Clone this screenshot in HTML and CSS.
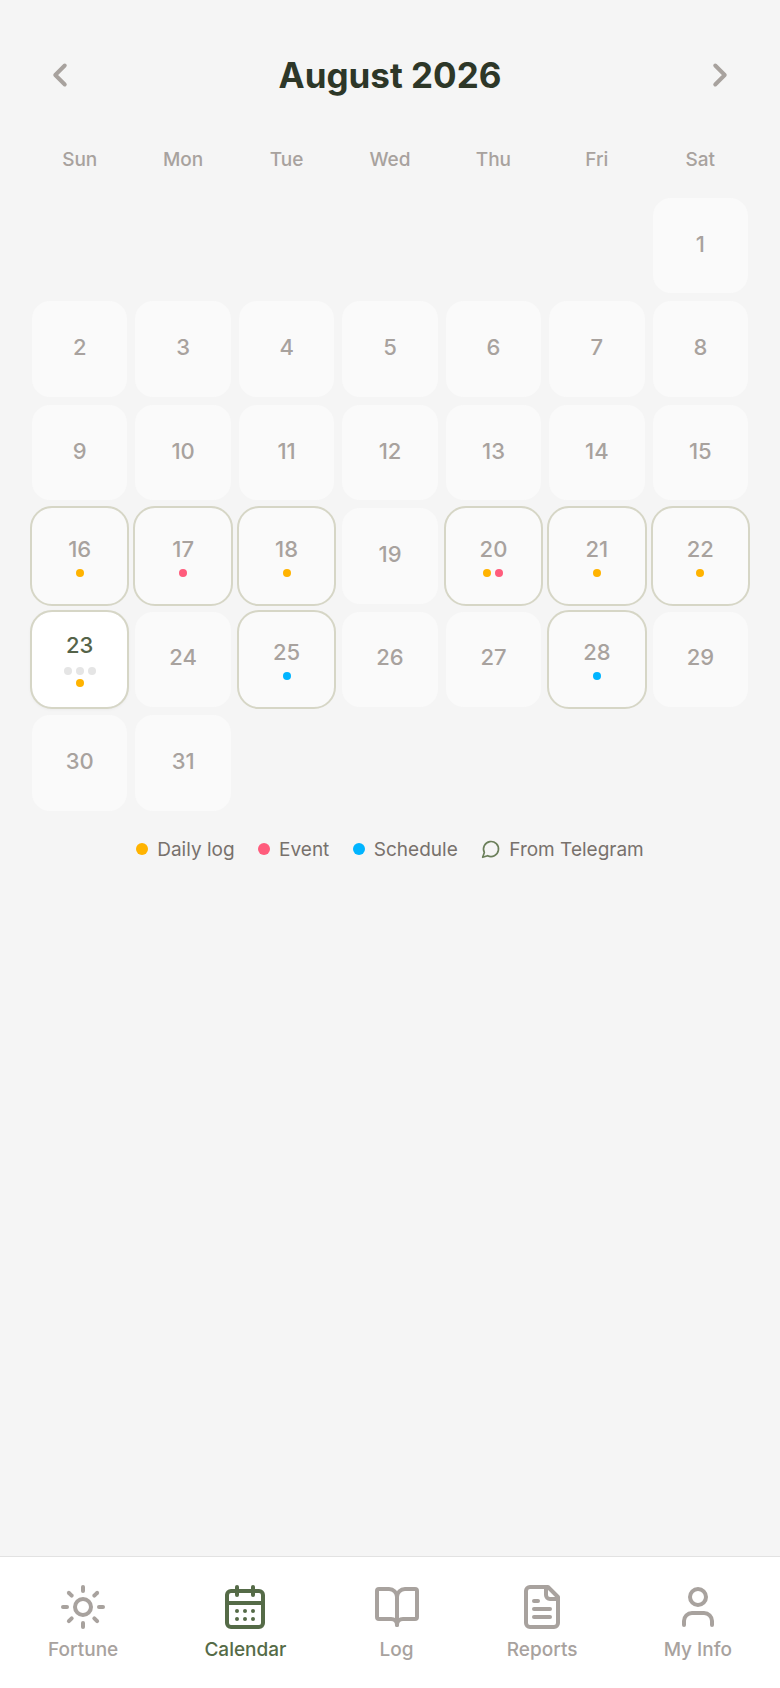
FILE: index.html
```html
<!DOCTYPE html>
<html lang="en">
<head>
  <meta charset="UTF-8" />
  <meta name="viewport" content="width=device-width, initial-scale=1.0"/>
  <title>Calendar</title>
  <link rel="stylesheet" href="styles.css">
</head>
<body>

<main class="page">
  <header class="month">
    <svg class="chev" viewBox="0 0 24 24"><path d="m15 18-6-6 6-6"/></svg>
    <h1>August 2026</h1>
    <svg class="chev" viewBox="0 0 24 24"><path d="m9 18 6-6-6-6"/></svg>
  </header>

  <div class="grid weekdays">
    <span>Sun</span><span>Mon</span><span>Tue</span><span>Wed</span><span>Thu</span><span>Fri</span><span>Sat</span>
  </div>

  <div class="grid days">
    <div class="blank"></div><div class="blank"></div><div class="blank"></div><div class="blank"></div><div class="blank"></div><div class="blank"></div>
    <div class="day"><span>1</span></div>
    <div class="day"><span>2</span></div>
    <div class="day"><span>3</span></div>
    <div class="day"><span>4</span></div>
    <div class="day"><span>5</span></div>
    <div class="day"><span>6</span></div>
    <div class="day"><span>7</span></div>
    <div class="day"><span>8</span></div>
    <div class="day"><span>9</span></div>
    <div class="day"><span>10</span></div>
    <div class="day"><span>11</span></div>
    <div class="day"><span>12</span></div>
    <div class="day"><span>13</span></div>
    <div class="day"><span>14</span></div>
    <div class="day"><span>15</span></div>
    <div class="day marked"><span>16</span><div class="dots"><i class="dot log"></i></div></div>
    <div class="day marked"><span>17</span><div class="dots"><i class="dot event"></i></div></div>
    <div class="day marked"><span>18</span><div class="dots"><i class="dot log"></i></div></div>
    <div class="day"><span>19</span></div>
    <div class="day marked"><span>20</span><div class="dots"><i class="dot log"></i><i class="dot event"></i></div></div>
    <div class="day marked"><span>21</span><div class="dots"><i class="dot log"></i></div></div>
    <div class="day marked"><span>22</span><div class="dots"><i class="dot log"></i></div></div>
    <div class="day marked today">
      <span>23</span>
      <div class="dots loading"><i class="dot"></i><i class="dot"></i><i class="dot"></i></div>
      <div class="dots"><i class="dot log"></i></div>
    </div>
    <div class="day"><span>24</span></div>
    <div class="day marked"><span>25</span><div class="dots"><i class="dot sched"></i></div></div>
    <div class="day"><span>26</span></div>
    <div class="day"><span>27</span></div>
    <div class="day marked"><span>28</span><div class="dots"><i class="dot sched"></i></div></div>
    <div class="day"><span>29</span></div>
    <div class="day"><span>30</span></div>
    <div class="day"><span>31</span></div>
  </div>

  <div class="legend">
    <div class="key"><i class="dot log"></i>Daily log</div>
    <div class="key"><i class="dot event"></i>Event</div>
    <div class="key"><i class="dot sched"></i>Schedule</div>
    <div class="key key-tg"><svg class="bubble" viewBox="0 0 24 24"><path d="M7.9 20A9 9 0 1 0 4 16.1L2 22Z"/></svg>From Telegram</div>
  </div>
</main>

<nav class="tabs">
  <a class="tab">
    <svg viewBox="0 0 24 24"><circle cx="12" cy="12" r="4"/><path d="M12 2v2"/><path d="M12 20v2"/><path d="m4.93 4.93 1.41 1.41"/><path d="m17.66 17.66 1.41 1.41"/><path d="M2 12h2"/><path d="M20 12h2"/><path d="m6.34 17.66-1.41 1.41"/><path d="m19.07 4.93-1.41 1.41"/></svg>
    Fortune
  </a>
  <a class="tab active">
    <svg viewBox="0 0 24 24"><path d="M8 2v4"/><path d="M16 2v4"/><rect x="3" y="4" width="18" height="18" rx="2"/><path d="M3 10h18"/><path d="M8 14h.01"/><path d="M12 14h.01"/><path d="M16 14h.01"/><path d="M8 18h.01"/><path d="M12 18h.01"/><path d="M16 18h.01"/></svg>
    Calendar
  </a>
  <a class="tab">
    <svg viewBox="0 0 24 24"><path d="M12 7v14"/><path d="M3 18a1 1 0 0 1-1-1V4a1 1 0 0 1 1-1h5a4 4 0 0 1 4 4 4 4 0 0 1 4-4h5a1 1 0 0 1 1 1v13a1 1 0 0 1-1 1h-6a3 3 0 0 0-3 3 3 3 0 0 0-3-3z"/></svg>
    Log
  </a>
  <a class="tab">
    <svg viewBox="0 0 24 24"><path d="M15 2H6a2 2 0 0 0-2 2v16a2 2 0 0 0 2 2h12a2 2 0 0 0 2-2V7Z"/><path d="M14 2v4a2 2 0 0 0 2 2h4"/><path d="M10 9H8"/><path d="M16 13H8"/><path d="M16 17H8"/></svg>
    Reports
  </a>
  <a class="tab">
    <svg viewBox="0 0 24 24"><path d="M19 21v-2a4 4 0 0 0-4-4H9a4 4 0 0 0-4 4v2"/><circle cx="12" cy="7" r="4"/></svg>
    My Info
  </a>
</nav>

</body>
</html>
```

FILE: styles.css
```css
html, body {
  margin: 0;
  padding: 0;
  height: 100%;
  background: #f5f5f5;
  color: #a8a29e;
  font-family: 'Inter', sans-serif;
}
body {
  display: flex;
  flex-direction: column;
}
svg {
  fill: none;
  stroke: currentColor;
  stroke-width: 2;
  stroke-linecap: round;
  stroke-linejoin: round;
}
.page {
  flex: 1;
  padding: 0 32px;
}
.month {
  display: flex;
  align-items: center;
  justify-content: space-between;
  height: 48px;
  margin-top: 51px;
  padding: 0 9px;
}
.month h1 {
  margin: 0;
  font-size: 35px;
  font-weight: 700;
  color: #2d3728;
}
.chev {
  width: 38px;
  height: 38px;
  stroke-width: 2.5;
}
.grid {
  display: grid;
  grid-template-columns: repeat(7, 1fr);
  gap: 8px;
}
.weekdays {
  margin-top: 49px;
  height: 24px;
  line-height: 24px;
  font-size: 19px;
  font-weight: 500;
  text-align: center;
}
.days {
  margin-top: 26px;
}
.day {
  aspect-ratio: 1;
  box-sizing: border-box;
  padding-bottom: 4px;
  display: flex;
  flex-direction: column;
  align-items: center;
  justify-content: center;
  background: #fafafa;
  border-radius: 18px;
  font-size: 22px;
  font-weight: 500;
}
.day.marked {
  padding-bottom: 0;
  outline: 2px solid #d6d6c6;
  outline-offset: -0.5px;
  border-radius: 20px;
}
.day.today {
  background: #fff;
  color: #556349;
  box-shadow: 0 1px 4px rgba(0, 0, 0, 0.1);
}
.dots {
  display: flex;
  gap: 4px;
  margin-top: 7px;
}
.dots.loading {
  margin-top: 9px;
}
.dots.loading + .dots {
  margin-top: 4px;
}
.dots.loading .dot {
  background: #e5e5e5;
}
.dot {
  display: block;
  width: 8px;
  height: 8px;
  border-radius: 50%;
}
.log { background: #ffb300; }
.event { background: #ff5c7c; }
.sched { background: #00b4ff; }
.legend {
  display: flex;
  justify-content: center;
  gap: 23.5px;
  margin-top: 27px;
  font-size: 19px;
  color: #78716c;
}
.key {
  display: flex;
  align-items: center;
  gap: 9px;
}
.key .dot {
  width: 12px;
  height: 12px;
}
.key-tg {
  gap: 8px;
}
.bubble {
  width: 20px;
  height: 20px;
  color: #6b7f5a;
}
.tabs {
  display: flex;
  justify-content: space-around;
  height: 132px;
  box-sizing: border-box;
  padding: 26px 5px 0;
  background: #fff;
  border-top: 1px solid #e2e2e2;
}
.tab {
  display: flex;
  flex-direction: column;
  align-items: center;
  gap: 7px;
  font-size: 19px;
  font-weight: 500;
}
.tab svg {
  width: 48px;
  height: 48px;
}
.tab.active {
  color: #556b47;
}
```
